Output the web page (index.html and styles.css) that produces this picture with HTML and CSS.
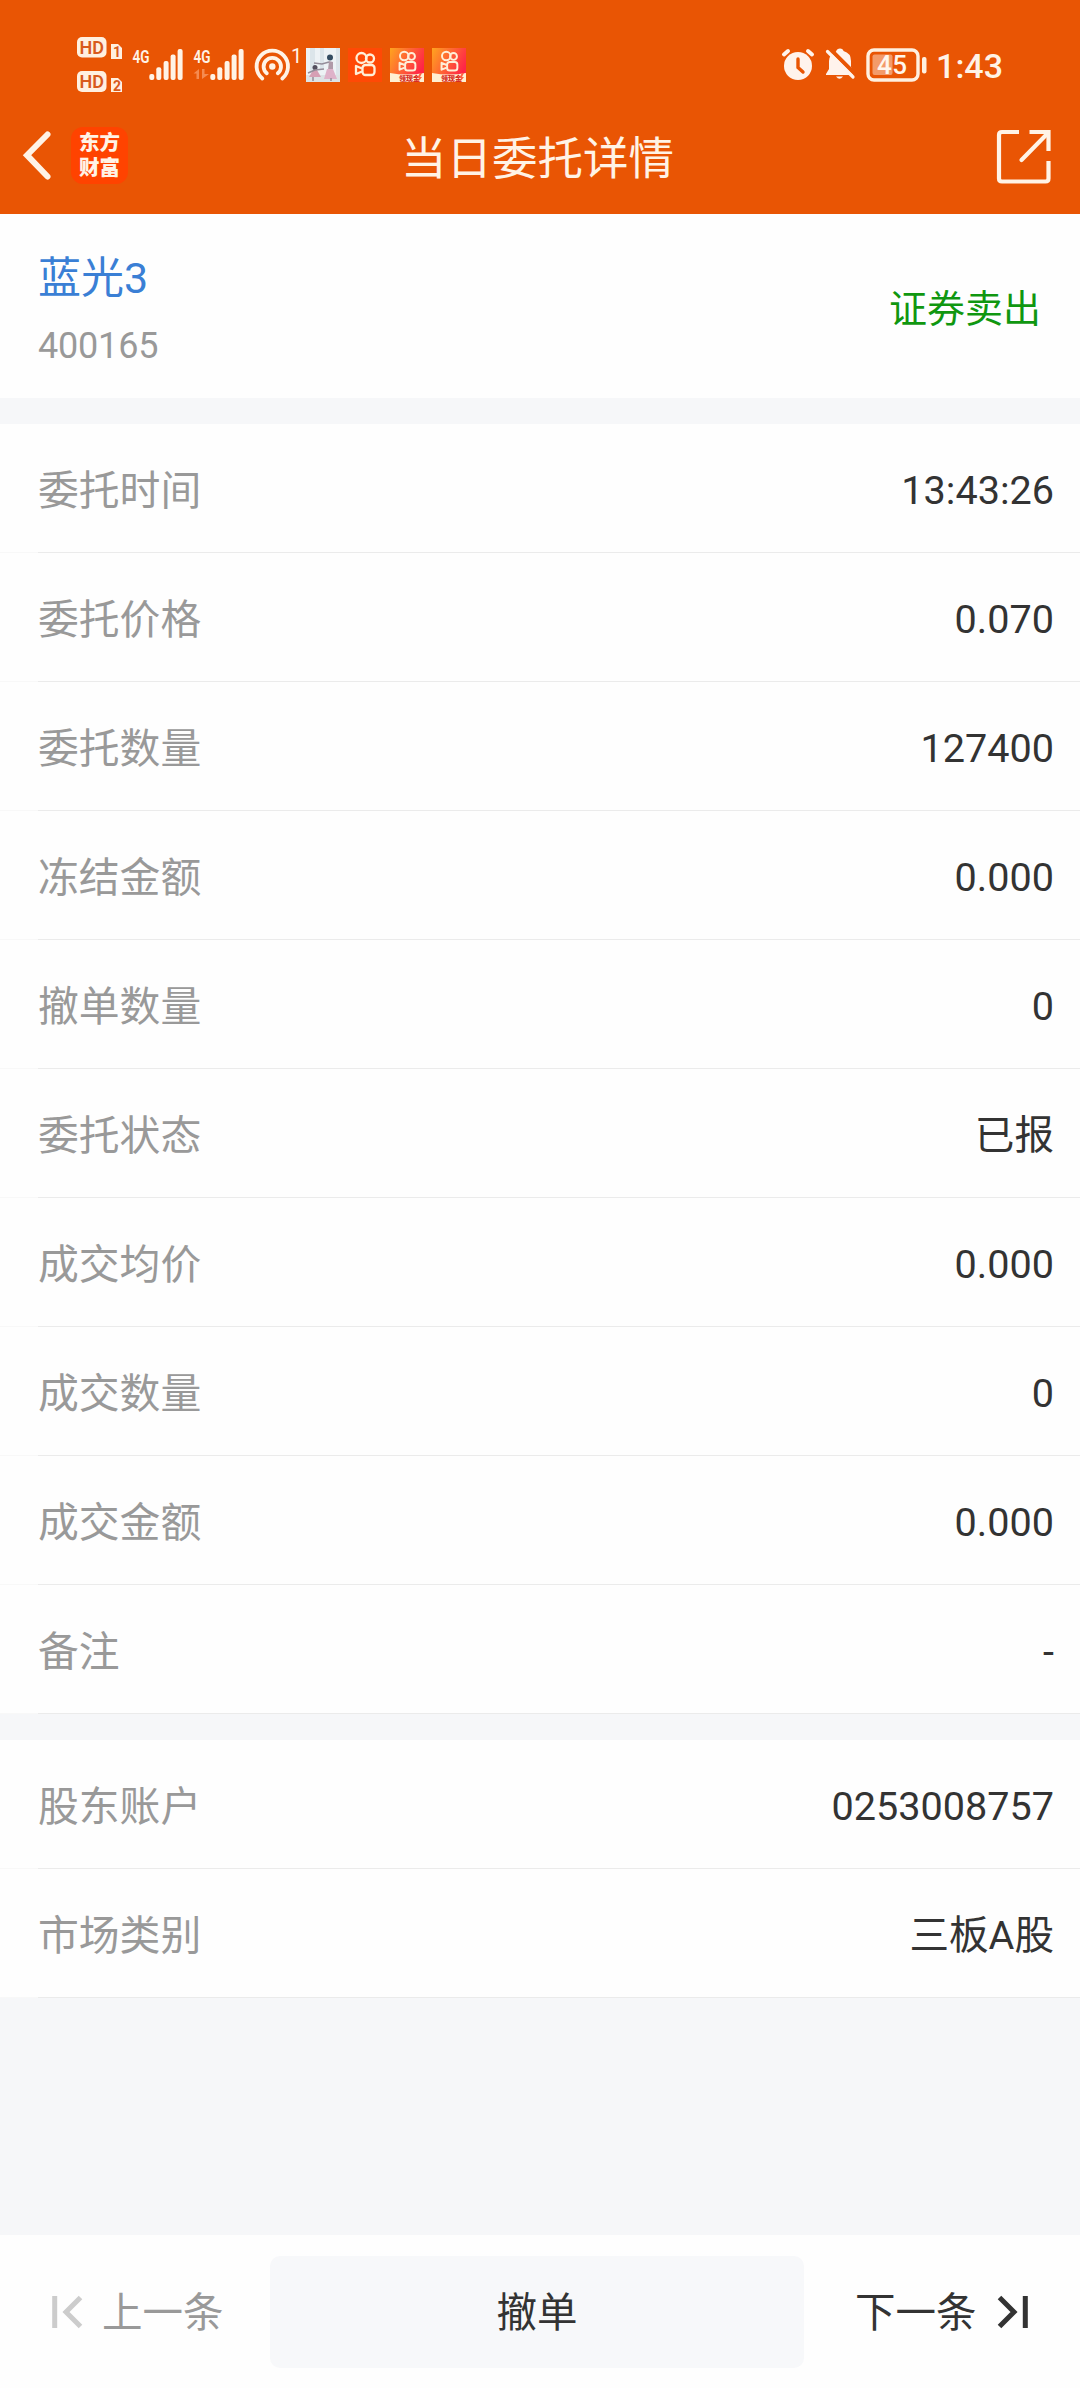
FILE: index.html
```html
<!DOCTYPE html>
<html lang="zh-CN">
<head>
<meta charset="utf-8">
<title>当日委托详情</title>
<link rel="stylesheet" href="styles.css">
</head>
<body>
<svg class="defs" aria-hidden="true">
  <defs>
    <linearGradient id="warm" x1="0" y1="0" x2="1" y2="0.5">
      <stop offset="0" stop-color="#ffa51f"/><stop offset="0.5" stop-color="#ff6534"/><stop offset="1" stop-color="#ff2448"/>
    </linearGradient>
    <symbol id="signal" viewBox="0 0 35 33">
      <g fill="#fff3e6"><rect x="0.3" y="26" width="5" height="6" rx="2"/><rect x="7.3" y="19.3" width="5" height="12.7" rx="2"/><rect x="14.6" y="13" width="5" height="19" rx="2"/><rect x="21.6" y="6.5" width="5" height="25.5" rx="2"/><rect x="28.6" y="1" width="5" height="31" rx="2"/></g>
    </symbol>
    <symbol id="camera" viewBox="0 0 24 28">
      <g fill="none" stroke="#ffefd8" stroke-width="2.3" stroke-linejoin="round"><circle cx="8.5" cy="7" r="5"/><circle cx="17" cy="7.5" r="4"/><rect x="9.5" y="14" width="12" height="10" rx="3"/><path d="M9 17.5L3 15v8l6-2.5"/></g>
    </symbol>
  </defs>
</svg>
<div class="screen">
  <header class="top">
    <div class="status">
      <div class="status-left">
        <svg class="hd" width="47" height="58" viewBox="0 0 47 58">
          <g fill="#fff0e0"><rect x="1" y="1" width="29.5" height="20.5" rx="5"/><path d="M35 8h7l4 4v11H35z"/><rect x="1" y="35" width="29.5" height="21" rx="5"/><path d="M35 42h7l4 4v10H35z"/></g>
          <g class="hd-text"><text x="3.5" y="17.5" textLength="24.5">HD</text><text x="3.5" y="51.8" textLength="24.5">HD</text><text class="sub" x="37" y="21">1</text><text class="sub" x="37" y="54.5">2</text></g>
        </svg>
        <svg class="net" width="52" height="34" viewBox="0 0 52 34"><text x="0.5" y="15" textLength="17" lengthAdjust="spacingAndGlyphs">4G</text><use href="#signal" x="17" y="0" width="35" height="33"/></svg>
        <svg class="net net-2" width="52" height="34" viewBox="0 0 52 34"><text x="0.5" y="15" textLength="17" lengthAdjust="spacingAndGlyphs">4G</text><path d="M0.5 25.5L6 21v10H3.5v-5.500zM9 21h2.500v5H16L9 31z" fill="#f58b50"/><use href="#signal" x="17" y="0" width="35" height="33"/></svg>
        <svg class="hotspot" width="48" height="34" viewBox="0 0 48 34">
          <g fill="none" stroke="#fff3e6" stroke-width="3.8" stroke-linecap="round"><path d="M8.300 30.500A15.700 15.700 0 1 1 28.300 30.500"/><path d="M12.800 25.300A8.700 8.700 0 1 1 23.800 25.300"/></g>
          <circle cx="18.300" cy="18.500" r="3.200" fill="#fff3e6"/><text x="37" y="15">1</text>
        </svg>
        <svg class="tile" width="34" height="34" viewBox="0 0 34 34">
          <rect width="34" height="34" fill="#edf2f5"/><path d="M4 0h5v24H4zM14 0h4v22h-4zM30 0h4v30h-4z" fill="#dce5ea"/><path d="M0 27h34v7H0z" fill="#dce3e5"/>
          <circle cx="24" cy="9.500" r="3" fill="#334c61"/><path d="M23 13l4 1v8h-5z" fill="#b09aa8"/><path d="M21 21h6l4 10H18z" fill="#deb2c9"/><circle cx="9" cy="19.500" r="2.500" fill="#544f5e"/><path d="M7 22h4l4 7H3z" fill="#d69fb4"/><path d="M8 15l8 1 7-2M2 25l7-3 9-1M7 29v4M25 30v3" stroke="#948d99" stroke-width="1.500" fill="none"/>
        </svg>
        <svg class="tile" width="34" height="34" viewBox="0 0 34 34"><rect width="34" height="34" fill="#ff4906"/><use href="#camera" x="5" y="3" width="24" height="28"/></svg>
        <svg class="tile" width="34" height="34" viewBox="0 0 34 34"><rect width="34" height="34" fill="url(#warm)"/><use href="#camera" x="7" y="2" width="20.500" height="24"/><path d="M0 25q17 3 34 0v9H0z" fill="#fff0d2"/><text class="promo" x="9" y="32.500">领现金</text><path d="M30 25l-3 5h2l-1 4 4-5h-2l2-4z" fill="#ff6042"/></svg>
        <svg class="tile" width="34" height="34" viewBox="0 0 34 34"><rect width="34" height="34" fill="url(#warm)"/><use href="#camera" x="7" y="2" width="20.500" height="24"/><path d="M0 25q17 3 34 0v9H0z" fill="#fff0d2"/><text class="promo" x="9" y="32.500">领现金</text><path d="M30 25l-3 5h2l-1 4 4-5h-2l2-4z" fill="#ff6042"/></svg>
      </div>
      <div class="status-right">
        <svg width="34" height="34" viewBox="0 0 34 34"><circle cx="17" cy="18" r="14" fill="#fff3ec"/><g fill="none" stroke="#fff3ec" stroke-width="4" stroke-linecap="round"><path d="M3 6.500l4-3.500M31 6.500L27 3"/></g><path d="M17 11v8.500l5 4.500" fill="none" stroke="#e95504" stroke-width="3.400" stroke-linecap="round"/></svg>
        <svg class="bell" width="32" height="34" viewBox="0 0 32 34"><path d="M12 3.500q1-3 4-3t3.500 2.500Q27 5 27 13v6l3 6v2H2v-1l3-5v-8q0-3 1.500-5z" fill="#fff3ec"/><path d="M12 28.500h7q-3.500 4.500-7 0z" fill="#fff3ec"/><path d="M5 0l27 27" stroke="#e95504" stroke-width="4"/><path d="M3.500 3.500L29 29" stroke="#fff3ec" stroke-width="3.200" stroke-linecap="round"/></svg>
        <svg class="battery" width="62" height="34" viewBox="0 0 62 34"><rect x="2" y="2" width="50" height="30" rx="6" fill="none" stroke="#fff0e0" stroke-width="3.400"/><rect x="6.500" y="6.500" width="20" height="20.500" rx="2" fill="#f39b6a"/><rect x="56" y="9" width="4.500" height="16.500" rx="2" fill="#fff0e0"/><text x="11" y="25.500" textLength="30">45</text></svg>
        <span class="clock">1:43</span>
      </div>
    </div>
    <div class="nav">
      <div class="nav-left">
        <svg width="30" height="50" viewBox="0 0 30 50"><path d="M25.500 3.500L5 24.200 25.500 45.500" fill="none" stroke="#fff3e6" stroke-width="6" stroke-linecap="round" stroke-linejoin="miter"/></svg>
        <div class="brand"><span>东方</span><span>财富</span></div>
      </div>
      <h1 class="title">当日委托详情</h1>
      <svg class="share" width="56" height="56" viewBox="0 0 56 56"><g fill="none" stroke="#fff3e6" stroke-width="4.200"><path d="M23 3H6Q3 3 3 6v43.500q0 3 3 3h43.500q3 0 3-3V32"/><path d="M33.500 3h19v19"/><path d="M25.500 31L51 5" stroke-linecap="round"/></g></svg>
    </div>
  </header>
  <section class="stock">
    <div class="stock-id"><div class="stock-name">蓝光3</div><div class="stock-code">400165</div></div>
    <div class="side">证券卖出</div>
  </section>
  <dl class="list">
    <div class="row"><dt>委托时间</dt><dd>13:43:26</dd></div>
    <div class="row"><dt>委托价格</dt><dd>0.070</dd></div>
    <div class="row"><dt>委托数量</dt><dd>127400</dd></div>
    <div class="row"><dt>冻结金额</dt><dd>0.000</dd></div>
    <div class="row"><dt>撤单数量</dt><dd>0</dd></div>
    <div class="row"><dt>委托状态</dt><dd>已报</dd></div>
    <div class="row"><dt>成交均价</dt><dd>0.000</dd></div>
    <div class="row"><dt>成交数量</dt><dd>0</dd></div>
    <div class="row"><dt>成交金额</dt><dd>0.000</dd></div>
    <div class="row"><dt>备注</dt><dd>-</dd></div>
  </dl>
  <dl class="list">
    <div class="row"><dt>股东账户</dt><dd>0253008757</dd></div>
    <div class="row"><dt>市场类别</dt><dd>三板A股</dd></div>
  </dl>
  <footer class="bar">
    <div class="step prev">
      <svg width="32" height="34" viewBox="0 0 32 34"><path d="M3.700 1v32M29.500 2.500L15 17l14.500 14.500" fill="none" stroke="#ccc" stroke-width="5"/></svg>
      <span>上一条</span>
    </div>
    <div class="cancel">撤单</div>
    <div class="step next">
      <span>下一条</span>
      <svg width="32" height="34" viewBox="0 0 32 34"><path d="M2.500 2.500L17 17 2.500 31.500M28.300 1v32" fill="none" stroke="#333" stroke-width="5"/></svg>
    </div>
  </footer>
</div>
</body>
</html>
```
FILE: styles.css
```css
* { box-sizing: border-box; }
body {
  margin: 0;
  font-family: Roboto, "Noto Sans CJK SC", sans-serif;
  color: #333;
}
svg { display: block; flex: none; overflow: visible; }
.defs { width: 0; height: 0; position: absolute; }
.screen {
  display: flex;
  flex-direction: column;
  width: 1080px;
  height: 2388px;
  background: #f6f7f9;
}

.top { height: 214px; background: #e95504; color: #fff3e6; }
.status {
  display: flex;
  justify-content: space-between;
  height: 100px;
  padding: 36px 77px 0 76px;
}
.status-left, .status-right { display: flex; align-items: flex-start; }
.status-left > svg, .status-right > svg { margin-top: 12px; }
.status-left > .hd { margin-top: 0; }
.hd-text { fill: #d85a1c; font-size: 18px; font-weight: 600; }
.hd-text .sub { font-size: 14px; font-weight: 700; }
.net { margin-left: 9px; }
.net text { fill: #fff3e6; font-size: 19px; font-weight: 600; }
.net-2 { margin-left: 9px; }
.hotspot { margin-left: 9px; }
.hotspot text { fill: #fff3e6; font-size: 20px; }
.tile + .tile { margin-left: 8px; }
.hotspot + .tile { margin-left: 4px; }
.promo { font-size: 7px; font-weight: 900; fill: #d62c25; }
.bell { margin-left: 9px; }
.battery { margin-left: 10px; }
.battery text { fill: #fff6ec; font-size: 26px; font-weight: 500; }
.clock {
  margin-left: 8px;
  font-size: 34px;
  font-weight: 500;
  line-height: 60px;
}

.nav {
  display: grid;
  grid-template-columns: 1fr auto 1fr;
  align-items: center;
  height: 114px;
  padding: 0 27px 0 22px;
}
.nav-left { display: flex; align-items: center; gap: 19px; margin-top: -3px; }
.brand {
  display: flex;
  flex-direction: column;
  align-items: center;
  justify-content: center;
  width: 57px;
  height: 57px;
  border-radius: 12px;
  background: #ff4300;
  font-size: 20.500px;
  font-weight: 800;
  line-height: 24.500px;
}
.title { margin: 0; padding-top: 6px; font-size: 45.500px; font-weight: 400; line-height: 60px; }
.share { justify-self: end; margin-right: 1px; }

.stock {
  display: flex;
  justify-content: space-between;
  align-items: center;
  height: 184px;
  padding: 6px 39px 0 38px;
  background: #fefefe;
}
.stock-id { padding-top: 5px; }
.stock-name { font-size: 43px; line-height: 60px; color: #3a7fd5; }
.stock-code { margin-top: 8px; font-size: 36px; line-height: 60px; letter-spacing: -0.200px; color: #999; }
.side { font-size: 38px; line-height: 60px; color: #109710; }

.list { margin: 26px 0 0; }
.row {
  display: flex;
  justify-content: space-between;
  align-items: center;
  height: 129px;
  padding: 4px 26px 0 38px;
  background:
    linear-gradient(to right, #f8f8f8 38px, #ebebeb 38px) bottom / 100% 1px no-repeat,
    #fefefe;
  line-height: 60px;
}
.row dt { font-size: 40.800px; color: #999; }
.row dd { margin: 0; font-size: 39.600px; }

.bar {
  display: grid;
  grid-template-columns: 270px 534px 276px;
  align-items: start;
  height: 153px;
  margin-top: auto;
  padding-top: 21px;
  background: #fefefe;
  font-size: 40.500px;
  line-height: 60px;
}
.step { display: flex; align-items: center; height: 112px; }
.step span { padding-top: 2px; }
.prev { gap: 19px; padding-left: 51px; color: #999; }
.next { gap: 20px; padding-left: 51px; }
.cancel {
  display: flex;
  align-items: center;
  justify-content: center;
  height: 112px;
  padding-top: 2px;
  border-radius: 10px;
  background: #f7f8fa;
}
```
